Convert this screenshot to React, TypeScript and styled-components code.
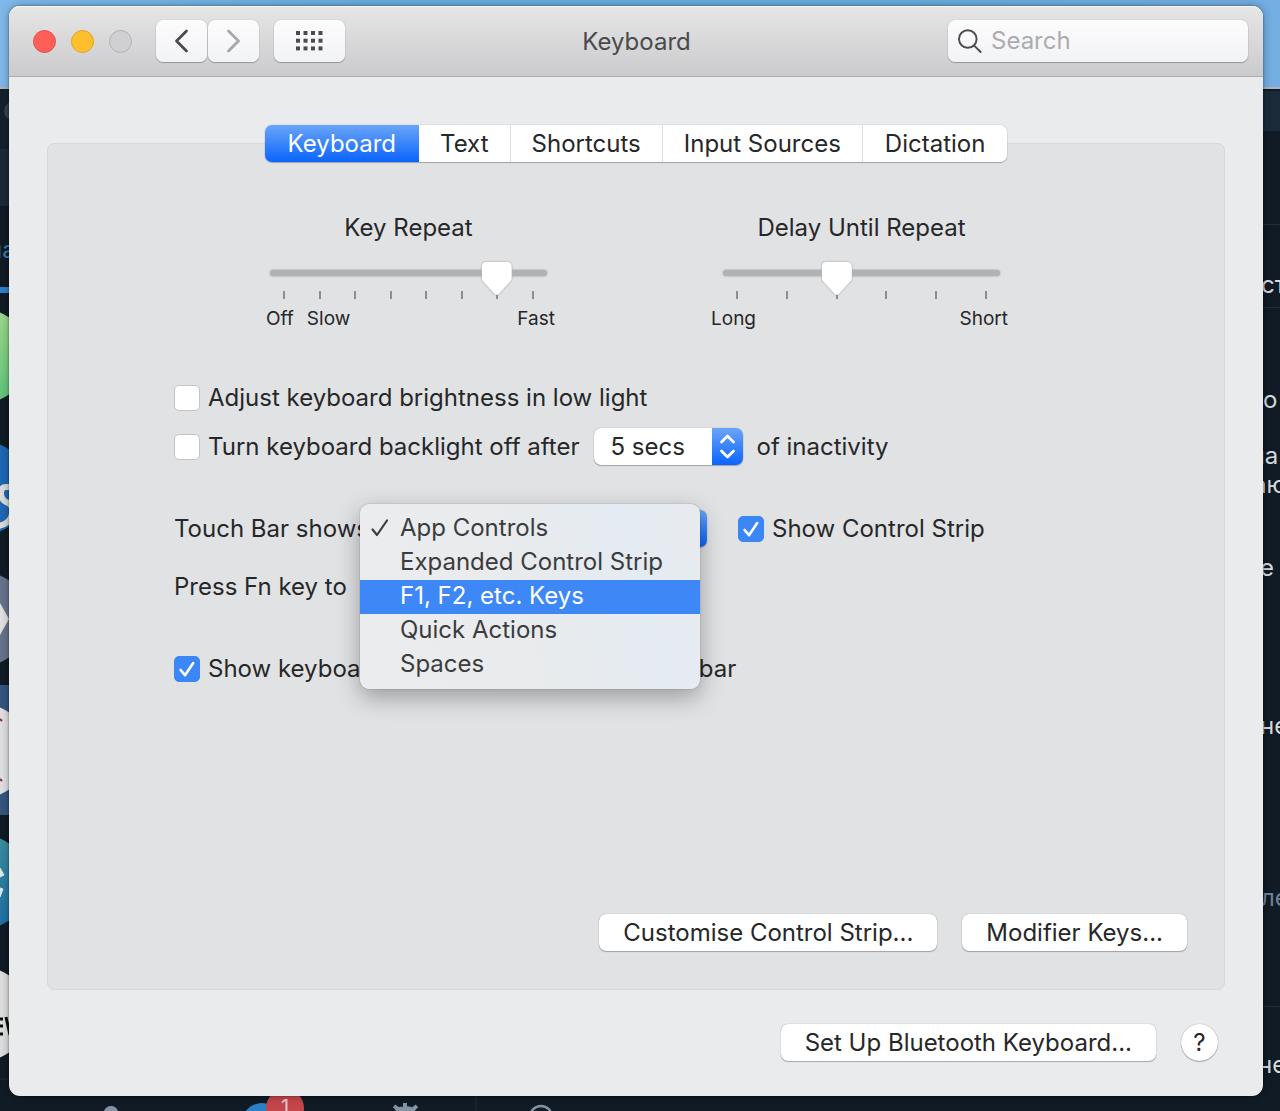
import React, { useState } from "react";
import styled, { createGlobalStyle, css } from "styled-components";

const GlobalStyle = createGlobalStyle`
  * { box-sizing: border-box; }
  body {
    margin: 0;
    background: #101b25;
    color: #262728;
    font-family: Inter, "Liberation Sans", "Noto Sans", sans-serif;
    font-size: 24px;
    line-height: 30px;
    -webkit-font-smoothing: antialiased;
  }
  button, input, select { font: inherit; color: inherit; margin: 0; }
`;

/* ---------- Desktop behind the window ---------- */

const Desktop = styled.div`
  position: relative;
  display: flex;
  flex-direction: column;
  min-height: 100vh;
  padding: 6px 17px 15px 9px;
  overflow: hidden;
`;

const Backdrop = styled.div`
  position: absolute;
  inset: 0;
  overflow: hidden;
  background: #101b25;
`;

const Sky = styled.div`
  height: 89px;
  background: linear-gradient(90deg, #7fb9ea, #6aaede 30%, #6aaede 70%, #74aee3);
  border-bottom: 2px solid #aeb4b8;
`;

const ChatHeader = styled.div`
  position: absolute;
  top: 91px;
  right: 0;
  width: 100px;
  height: 40px;
  background: #1b2b3a;
`;

const ChatSearch = styled.div`
  position: absolute;
  top: 89px;
  left: 0;
  width: 60px;
  height: 117px;
  background: linear-gradient(#14212c 60px, #1b2a38 60px);
`;

const Rule = styled.div<{ $top: number }>`
  position: absolute;
  top: ${(p) => p.$top}px;
  right: 0;
  width: 40px;
  height: 1px;
  background: #22303c;
`;

const Fragment = styled.span<{ $top: number; $reach: number; $dim?: boolean }>`
  position: absolute;
  top: ${(p) => p.$top}px;
  left: calc(100% - ${(p) => p.$reach}px);
  color: ${(p) => (p.$dim ? "#6f8296" : "#d5dade")};
  white-space: nowrap;
`;

const ChatTab = styled.span`
  position: absolute;
  top: 235px;
  left: -12px;
  color: #2f7fc4;
`;

const BackArt = styled.svg`
  position: absolute;
  top: 0;
  left: 0;
`;

const Badge = styled.span`
  position: absolute;
  top: 1089px;
  left: 266px;
  width: 38px;
  height: 38px;
  border-radius: 50%;
  background: #c4454a;
  color: #e4d0d2;
  font-size: 20px;
  line-height: 36px;
  text-align: center;
`;

/* ---------- Window ---------- */

const Window = styled.main`
  position: relative;
  flex: 1;
  display: flex;
  flex-direction: column;
  border-radius: 11px;
  background: #eaebed;
  box-shadow: 0 0 2px rgba(0, 0, 0, 0.5), 0 0 10px rgba(0, 0, 0, 0.3);
`;

const TitleBar = styled.header`
  display: grid;
  grid-template-columns: 1fr auto 1fr;
  align-items: center;
  height: 71px;
  padding: 0 15px 0 24px;
  border-bottom: 1px solid #adadae;
  border-radius: 11px 11px 0 0;
  background: linear-gradient(#e6e6e7, #cbcbcd);
  box-shadow: inset 0 1px 0 #f6f6f6;
`;

const Title = styled.h1`
  margin: 2px 8px 0 0;
  font-size: 24px;
  font-weight: 400;
  color: #4a4a4b;
`;

const BarLeft = styled.div`
  display: flex;
  align-items: center;
`;

const Lights = styled.div`
  display: flex;
  gap: 15px;
  margin-right: 24px;
`;

const Light = styled.button<{ $fill: string; $edge: string }>`
  width: 23px;
  height: 23px;
  padding: 0;
  border: 1px solid ${(p) => p.$edge};
  border-radius: 50%;
  background: ${(p) => p.$fill};
`;

const ToolButton = styled.button<{ $wide?: boolean }>`
  display: grid;
  place-items: center;
  width: ${(p) => (p.$wide ? 71 : 51)}px;
  height: 42px;
  margin-right: ${(p) => (p.$wide ? 0 : 1)}px;
  margin-left: ${(p) => (p.$wide ? 14 : 0)}px;
  padding: 0;
  border: 0;
  border-radius: 7px;
  background: linear-gradient(#fcfcfd, #f2f3f5);
  box-shadow: 0 0 1px rgba(0, 0, 0, 0.4), 0 1px 1px rgba(0, 0, 0, 0.25);
`;

const SearchField = styled.label`
  justify-self: end;
  display: flex;
  align-items: center;
  gap: 9px;
  width: 300px;
  height: 42px;
  padding: 0 10px;
  border-radius: 7px;
  background: linear-gradient(#fcfcfd, #f2f3f5);
  box-shadow: 0 0 1px rgba(0, 0, 0, 0.4), 0 1px 1px rgba(0, 0, 0, 0.25);

  input {
    flex: 1;
    min-width: 0;
    padding: 0;
    border: 0;
    outline: 0;
    background: transparent;
  }
  input::placeholder { color: #acacae; opacity: 1; }
`;

const Body = styled.div`
  flex: 1;
  display: flex;
  flex-direction: column;
  padding: 66px 38px 35px;
`;

const Pane = styled.section`
  flex: 1;
  display: flex;
  flex-direction: column;
  padding: 0 37px 38px;
  border: 1px solid #d7d8da;
  border-radius: 7px;
  background: #e1e2e4;
`;

const whiteControl = css`
  border: 0;
  background: #fff;
  box-shadow: 0 0 1px rgba(0, 0, 0, 0.45), 0 1px 1px rgba(0, 0, 0, 0.25);
`;

const TabBar = styled.nav`
  display: flex;
  align-self: center;
  height: 37px;
  margin-top: -19px;
  border-radius: 7px;
  overflow: hidden;
  ${whiteControl}
`;

const Tab = styled.button<{ $active?: boolean }>`
  padding: 0 21px;
  border: 0;
  border-left: 1px solid #dcdddd;
  background: #fff;

  &:first-child { padding: 0 23px; border-left: 0; }
  &:last-child { padding: 0 22px; }

  ${(p) =>
    p.$active &&
    css`
      background: linear-gradient(#6aa5f8, #0a64fe);
      color: #fff;
      & + button { border-left: 0; }
    `}
`;

/* ---------- Sliders ---------- */

const Sliders = styled.div`
  display: flex;
  justify-content: center;
  gap: 176px;
  margin: 51px 0 48px;
  padding-right: 2px;
`;

const SliderBox = styled.div`
  display: flex;
  flex-direction: column;
  width: 277px;

  label { align-self: center; margin-bottom: 19px; white-space: nowrap; }
`;

const Range = styled.input`
  position: relative;
  z-index: 1;
  appearance: none;
  width: 100%;
  height: 34px;
  background: transparent;
  filter: drop-shadow(0 0 1px rgba(0, 0, 0, 0.3));

  &::-webkit-slider-runnable-track {
    height: 6px;
    margin-bottom: 12px;
    border-radius: 3px;
    background: #b1b2b4;
  }
  &::-webkit-slider-thumb {
    appearance: none;
    width: 30px;
    height: 34px;
    margin-top: -8px;
    background: #fff;
    clip-path: path("M5 0H25Q30 0 30 5V16Q30 18 28 20L17 32Q15 34 13 32L2 20Q0 18 0 16V5Q0 0 5 0Z");
  }
`;

const Ticks = styled.div`
  display: flex;
  justify-content: space-between;
  height: 8px;
  margin-top: -5px;
  padding: 0 13px;

  i { width: 2px; background: #8d8e90; }
`;

const TickLabels = styled.div<{ $bleed: number }>`
  display: flex;
  margin: 8px -8px 0 -${(p) => p.$bleed}px;
  font-size: 19px;
  line-height: 24px;

  span + span { margin-left: 13px; }
  span:last-child { margin-left: auto; }
`;

interface SliderProps {
  id: string;
  title: string;
  steps: number;
  initial: number;
  labels: string[];
  bleed: number;
}

function Slider({ id, title, steps, initial, labels, bleed }: SliderProps) {
  const [value, setValue] = useState(initial);
  return (
    <SliderBox>
      <label htmlFor={id}>{title}</label>
      <Range
        id={id}
        type="range"
        min={1}
        max={steps}
        value={value}
        onChange={(e) => setValue(Number(e.target.value))}
      />
      <Ticks>
        {Array.from({ length: steps }, (_, i) => (
          <i key={i} />
        ))}
      </Ticks>
      <TickLabels $bleed={bleed}>
        {labels.map((l) => (
          <span key={l}>{l}</span>
        ))}
      </TickLabels>
    </SliderBox>
  );
}

/* ---------- Options ---------- */

const Options = styled.div`
  display: flex;
  flex-direction: column;
  padding-left: 89px;
`;

const Row = styled.div<{ $gap?: number }>`
  display: flex;
  align-items: center;
  height: 37px;
  margin-top: ${(p) => p.$gap ?? 0}px;
`;

const CheckLabel = styled.label`
  display: flex;
  align-items: center;
  gap: 8px;
  white-space: nowrap;
`;

const CheckBox = styled.span`
  display: grid;
  width: 26px;
  height: 26px;

  input {
    grid-area: 1 / 1;
    appearance: none;
    width: 26px;
    height: 26px;
    border: 1px solid #c3c4c6;
    border-radius: 5px;
    background: #fff;
  }
  input:checked { border-color: #3a86f5; background: #3b87f7; }
  svg { grid-area: 1 / 1; z-index: 1; pointer-events: none; visibility: hidden; }
  input:checked + svg { visibility: visible; }
`;

function Check({ label, on }: { label: string; on?: boolean }) {
  return (
    <CheckLabel>
      <CheckBox>
        <input type="checkbox" defaultChecked={on} />
        <svg width="26" height="26" viewBox="0 0 26 26" fill="none" stroke="#fff" strokeWidth="2.6" strokeLinecap="round" strokeLinejoin="round">
          <path d="M6.6 14L11 19.2L19.2 7" />
        </svg>
      </CheckBox>
      {label}
    </CheckLabel>
  );
}

const SelectBox = styled.span<{ $width: number }>`
  position: relative;
  display: flex;
  width: ${(p) => p.$width}px;
  height: 37px;

  select {
    appearance: none;
    width: 100%;
    height: 37px;
    padding: 0 40px 0 16px;
    border-radius: 7px;
    ${whiteControl}
  }
`;

const Stepper = styled.svg`
  position: absolute;
  top: 0;
  right: 0;
  border-radius: 0 7px 7px 0;
  background: linear-gradient(#6aa5f8, #0a64fe);
  pointer-events: none;
`;

function Arrows() {
  return (
    <Stepper width="31" height="37" viewBox="0 0 31 37" fill="none" stroke="#fff" strokeWidth="2.8" strokeLinecap="round" strokeLinejoin="round">
      <path d="M9.5 14L15.5 8L21.5 14M9.5 23L15.5 29L21.5 23" />
    </Stepper>
  );
}

const Inline = styled.div`
  display: flex;
  align-items: center;
  gap: 13px;
  margin-left: 15px;
`;

const FieldName = styled.label`
  width: 198px;
  white-space: nowrap;
`;

const Menu = styled.ul`
  position: absolute;
  z-index: 2;
  top: -6px;
  left: -12px;
  width: 340px;
  margin: 0;
  padding: 8px 0 7px;
  list-style: none;
  border-radius: 9px;
  background: linear-gradient(75deg, #ebeced 0%, #e9ebec 45%, #e4ebf2 80%, #e8ebee 100%);
  box-shadow: 0 0 1px rgba(0, 0, 0, 0.6), 0 8px 24px rgba(0, 0, 0, 0.32);
`;

const MenuItem = styled.button<{ $hot?: boolean }>`
  display: flex;
  align-items: center;
  width: 100%;
  height: 34px;
  padding: 0 0 2px 10px;
  border: 0;
  background: ${(p) => (p.$hot ? "#3d87f7" : "transparent")};
  color: ${(p) => (p.$hot ? "#fff" : "#3a3c3f")};
  text-align: left;
`;

const MenuMark = styled.span`
  display: flex;
  width: 30px;
`;

const Spacer = styled.span`
  width: 31px;
`;

const Actions = styled.div<{ $footer?: boolean }>`
  display: flex;
  justify-content: flex-end;
  gap: 25px;
  margin-top: ${(p) => (p.$footer ? "34px" : "auto")};
  padding-right: ${(p) => (p.$footer ? 7 : 0)}px;
`;

const PushButton = styled.button`
  height: 37px;
  padding: 0 24px;
  border-radius: 7px;
  ${whiteControl}
`;

const HelpButton = styled.button`
  width: 37px;
  height: 37px;
  padding: 0;
  border-radius: 50%;
  ${whiteControl}
`;

const tabs = ["Keyboard", "Text", "Shortcuts", "Input Sources", "Dictation"];
const modes = ["App Controls", "Expanded Control Strip", "F1, F2, etc. Keys", "Quick Actions", "Spaces"];

function Behind() {
  return (
    <Backdrop aria-hidden="true">
      <Sky />
      <ChatSearch />
      <ChatHeader />
      <ChatTab>на</ChatTab>
      <BackArt width="640" height="1111" viewBox="0 0 640 1111">
        <defs>
          <linearGradient id="green" x1="0" y1="0" x2="0" y2="1">
            <stop offset="0" stopColor="#9fd98c" />
            <stop offset="1" stopColor="#5cc578" />
          </linearGradient>
          <linearGradient id="teal" x1="0" y1="0" x2="0" y2="1">
            <stop offset="0" stopColor="#3c8f9e" />
            <stop offset="1" stopColor="#1d6fa8" />
          </linearGradient>
        </defs>
        <circle cx="14" cy="111" r="10" fill="#36424d" />
        <rect x="0" y="287" width="20" height="6" fill="#2f80cd" />
        <circle cx="-18" cy="356" r="47" fill="url(#green)" />
        <circle cx="-18" cy="488" r="47" fill="#1f68b4" />
        <path d="M14 487H6Q1 487 1 493T6 502Q14 504 12 514T-2 526" fill="none" stroke="#dcdcdc" strokeWidth="6" />
        <circle cx="-18" cy="619" r="47" fill="#66748c" />
        <path d="M0 603L9 619L0 635Z" fill="#e1e1e2" />
        <rect x="0" y="685" width="20" height="130" fill="#33557f" />
        <circle cx="-18" cy="751" r="47" fill="#e0e0e2" />
        <path d="M0 719l2 2M0 779l2 2" stroke="#8a3038" strokeWidth="2" />
        <circle cx="-18" cy="882" r="47" fill="url(#teal)" />
        <path d="M0 868l4 7l-4 2M0 888l3 1l-3 8" fill="#dce9ea" stroke="#dce9ea" strokeWidth="1" />
        <circle cx="-18" cy="1014" r="47" fill="#dededf" />
        <path d="M0 1019h3M0 1026h3M0 1034h3M6 1017l4 18" stroke="#0c0d0e" strokeWidth="3" />
        <path d="M0 1079h20M476 1090v21" stroke="#1f2c38" strokeWidth="1" />
        <path d="M104 1111Q106 1106 111 1106T118 1111Z" fill="#8493a3" />
        <circle cx="262" cy="1123" r="20" fill="#2a80c6" />
        <path d="M394 1106l4 3M405 1103v6M417 1106l-4 3M396 1111q9 -6 19 0" fill="#8493a3" stroke="#8493a3" strokeWidth="4" strokeLinejoin="round" />
        <circle cx="541" cy="1117" r="11" fill="none" stroke="#8493a3" strokeWidth="2.4" />
      </BackArt>
      <Badge>1</Badge>
      <Rule $top={224} />
      <Rule $top={307} />
      <Rule $top={1006} />
      <Fragment $top={270} $reach={19}>ст</Fragment>
      <Fragment $top={385} $reach={32}>до</Fragment>
      <Fragment $top={441} $reach={29}>ла</Fragment>
      <Fragment $top={470} $reach={27}>аю</Fragment>
      <Fragment $top={553} $reach={20}>е</Fragment>
      <Fragment $top={711} $reach={20}>не</Fragment>
      <Fragment $top={883} $reach={19} $dim>ле</Fragment>
      <Fragment $top={1050} $reach={22}>не</Fragment>
    </Backdrop>
  );
}

export default function App() {
  const [hot, setHot] = useState(2);
  return (
    <Desktop>
      <GlobalStyle />
      <Behind />
      <Window>
        <TitleBar>
          <BarLeft>
            <Lights>
              <Light aria-label="Close" $fill="#ff5f57" $edge="#e2504a" />
              <Light aria-label="Minimise" $fill="#fdbf2e" $edge="#dfa32a" />
              <Light aria-label="Zoom" $fill="#d0d0d2" $edge="#b2b2b4" />
            </Lights>
            <ToolButton aria-label="Back">
              <svg width="16" height="26" viewBox="0 0 16 26" fill="none" stroke="#4b4b4c" strokeWidth="2.8" strokeLinecap="round" strokeLinejoin="round">
                <path d="M12.5 3L2.5 13L12.5 23" />
              </svg>
            </ToolButton>
            <ToolButton aria-label="Forward">
              <svg width="16" height="26" viewBox="0 0 16 26" fill="none" stroke="#a7a7a9" strokeWidth="2.8" strokeLinecap="round" strokeLinejoin="round">
                <path d="M2.5 3L12.5 13L2.5 23" />
              </svg>
            </ToolButton>
            <ToolButton $wide aria-label="Show All">
              <svg width="27" height="20" viewBox="0 0 27 20" fill="#4b4b4c">
                {[0, 1, 2].map((r) =>
                  [0, 1, 2, 3].map((c) => (
                    <rect key={`${r}${c}`} x={c * 7.5} y={r * 7.7} width="4" height="4" />
                  ))
                )}
              </svg>
            </ToolButton>
          </BarLeft>
          <Title>Keyboard</Title>
          <SearchField>
            <svg width="24" height="24" viewBox="0 0 24 24" fill="none" stroke="#4b4b4c" strokeWidth="1.9" strokeLinecap="round">
              <circle cx="9.8" cy="10" r="8.8" />
              <path d="M16.2 16.6L22.6 23" />
            </svg>
            <input type="text" placeholder="Search" aria-label="Search" />
          </SearchField>
        </TitleBar>

        <Body>
          <Pane>
            <TabBar>
              {tabs.map((t, i) => (
                <Tab key={t} $active={i === 0}>
                  {t}
                </Tab>
              ))}
            </TabBar>

            <Sliders>
              <Slider id="repeat" title="Key Repeat" steps={8} initial={7} labels={["Off", "Slow", "Fast"]} bleed={4} />
              <Slider id="delay" title="Delay Until Repeat" steps={6} initial={3} labels={["Long", "Short"]} bleed={12} />
            </Sliders>

            <Options>
              <Row>
                <Check label="Adjust keyboard brightness in low light" />
              </Row>
              <Row $gap={12}>
                <Check label="Turn keyboard backlight off after" />
                <Inline>
                  <SelectBox $width={149}>
                    <select aria-label="Backlight delay" defaultValue="5 secs">
                      <option>5 secs</option>
                    </select>
                    <Arrows />
                  </SelectBox>
                  <span>of inactivity</span>
                </Inline>
              </Row>
              <Row $gap={45}>
                <FieldName htmlFor="touchbar">Touch Bar shows</FieldName>
                <SelectBox $width={335}>
                  <select id="touchbar" defaultValue={modes[0]}>
                    {modes.map((m) => (
                      <option key={m}>{m}</option>
                    ))}
                  </select>
                  <Arrows />
                  <Menu>
                    {modes.map((m, i) => (
                      <li key={m}>
                        <MenuItem $hot={i === hot} onMouseEnter={() => setHot(i)}>
                          <MenuMark>
                            {i === 0 && (
                              <svg width="20" height="20" viewBox="0 0 20 20" fill="none" stroke="#3a3c3f" strokeWidth="2.2" strokeLinecap="round" strokeLinejoin="round">
                                <path d="M2.5 11.5L7 17L17 2.5" />
                              </svg>
                            )}
                          </MenuMark>
                          {m}
                        </MenuItem>
                      </li>
                    ))}
                  </Menu>
                </SelectBox>
                <Spacer />
                <Check label="Show Control Strip" on />
              </Row>
              <Row $gap={21}>Press Fn key to</Row>
              <Row $gap={45}>
                <Check label="Show keyboard and emoji viewers in menu bar" on />
              </Row>
            </Options>

            <Actions>
              <PushButton>Customise Control Strip...</PushButton>
              <PushButton>Modifier Keys...</PushButton>
            </Actions>
          </Pane>

          <Actions $footer>
            <PushButton>Set Up Bluetooth Keyboard...</PushButton>
            <HelpButton>?</HelpButton>
          </Actions>
        </Body>
      </Window>
    </Desktop>
  );
}
